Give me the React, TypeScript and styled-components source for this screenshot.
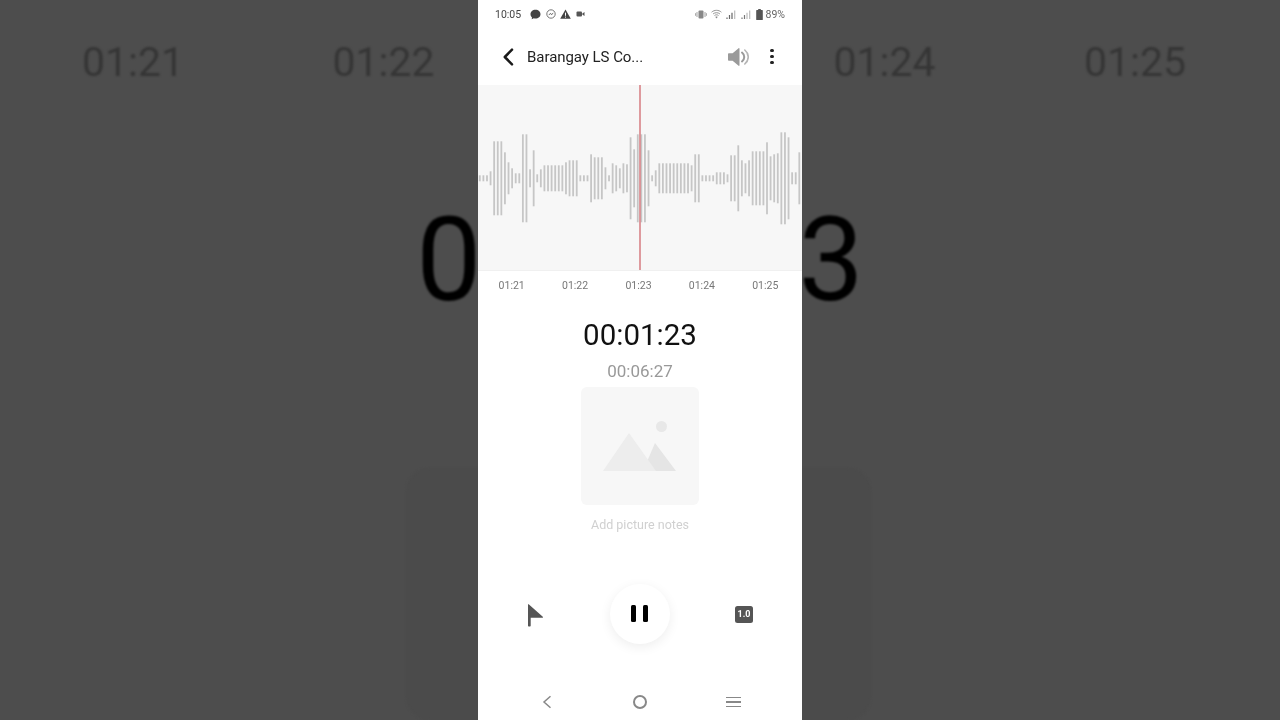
import React from 'react';
import styled, { createGlobalStyle } from 'styled-components';

const TICKS = ['01:21', '01:22', '01:23', '01:24', '01:25'];

// half heights of the wave form, read bar by bar (px above and below the centre line)
const BARS = [
  3, 3, 3, 7, 37, 37, 37, 26, 16, 10, 5, 5, 44, 44, 9, 28, 4, 9, 13, 13, 13, 13, 13, 13, 16, 18, 18, 18, 3, 3, 3, 24, 21,
  21, 21, 11, 3, 15, 13, 10, 15, 14, 41, 29, 44, 44, 44, 28, 3, 8, 15, 15, 15, 15, 15, 15, 15, 15, 15, 13, 24, 24, 3, 3,
  3, 3, 6, 6, 6, 4, 23, 23, 33, 18, 15, 18, 27, 27, 27, 27, 36, 22, 24, 25, 46, 46, 41, 6, 6, 26,
];

const App: React.FC = () => {
  return (
    <Page>
      <GlobalStyle />
      <Backdrop>
        <BackdropTicks>
          {TICKS.map((t) => (
            <BackdropTick key={t}>{t}</BackdropTick>
          ))}
        </BackdropTicks>
        <BackdropTime>00:01:23</BackdropTime>
        <BackdropCard />
      </Backdrop>

      <Phone>
        <StatusBar>
          <StatusGroup>
            <Clock>10:05</Clock>
            <StatusIcons>
              <svg width="11" height="11" viewBox="0 0 11 11">
                <path d="M5.5 .8C2.6.8.5 2.7.5 5.2c0 1.3.6 2.4 1.5 3.2l-.3 1.9 2.1-1c.5.1 1.1.2 1.7.2 2.9 0 5-1.9 5-4.3S8.4.8 5.5.8z" fill="#444" />
              </svg>
              <svg width="10" height="10" viewBox="0 0 10 10">
                <circle cx="5" cy="5" r="4.2" fill="none" stroke="#666" strokeWidth="0.9" />
                <path d="M2.8 6l1.5-1.7 1.2 1 1.7-1.4-1.4 1.9-1.3-1z" fill="#555" stroke="#555" strokeWidth="0.4" />
              </svg>
              <svg width="11" height="10" viewBox="0 0 11 10">
                <path d="M5.5.5L10.8 9.7H.2z" fill="#444" />
                <rect x="5" y="3.6" width="1" height="3.2" fill="#fff" />
                <rect x="5" y="7.6" width="1" height="1" fill="#fff" />
              </svg>
              <svg width="9" height="8" viewBox="0 0 9 8">
                <rect x="0.5" y="1.5" width="5.5" height="5" rx="1" fill="#555" />
                <path d="M6.3 3.6L8.5 2v4L6.3 4.6z" fill="#555" />
              </svg>
            </StatusIcons>
          </StatusGroup>
          <StatusGroup>
            <StatusIconsRight>
              <svg width="12" height="9" viewBox="0 0 12 9">
                <rect x="3.5" y="0.5" width="5" height="8" rx="1" fill="#888" />
                <path d="M2 2v5M.6 3.2v2.6M10 2v5M11.4 3.2v2.6" stroke="#999" strokeWidth="0.9" fill="none" />
              </svg>
              <svg width="11" height="10" viewBox="0 0 11 10">
                <path d="M.6 3.2C3.4.7 7.6.7 10.4 3.2M2.1 4.9C4 3.3 7 3.3 8.9 4.9M3.5 6.5c1.2-.9 2.8-.9 4 0" stroke="#888" strokeWidth="0.9" fill="none" />
                <path d="M5.5 9.6L4.3 7.9c.7-.4 1.7-.4 2.4 0z" fill="#888" />
              </svg>
              <svg width="11" height="9" viewBox="0 0 11 9">
                <path d="M1 9V7.4M3.5 9V5M6 9V2.8" stroke="#666" strokeWidth="1.2" />
                <path d="M8.7 9V.5" stroke="#bbb" strokeWidth="1.2" />
              </svg>
              <svg width="11" height="9" viewBox="0 0 11 9">
                <path d="M1 9V7.4M3.5 9V5" stroke="#777" strokeWidth="1.2" />
                <path d="M6 9V2.8M8.7 9V.5" stroke="#bbb" strokeWidth="1.2" />
              </svg>
              <svg width="7" height="11" viewBox="0 0 7 11">
                <path d="M2.2 0h2.6v1H6.2a.6.6 0 0 1 .6.6v8.8a.6.6 0 0 1-.6.6H.8a.6.6 0 0 1-.6-.6V1.600a.6.6 0 0 1 .6-.6h1.400z" fill="#555" />
              </svg>
            </StatusIconsRight>
            <Battery>89%</Battery>
          </StatusGroup>
        </StatusBar>

        <Header>
          <IconSlot>
            <svg width="12" height="18" viewBox="0 0 12 18">
              <path d="M10 1.700L2.800 9l7.200 7.300" fill="none" stroke="#1a1a1a" strokeWidth="2.500" strokeLinecap="round" strokeLinejoin="round" />
            </svg>
          </IconSlot>
          <Title>Barangay LS Co...</Title>
          <HeaderActions>
            <svg width="21" height="20" viewBox="0 0 21 20">
              <path d="M1 6.300h3.600L10.600 1.200c.4-.3.9 0 .9.500v16.600c0 .5-.5.8-.9.500L4.600 13.700H1c-.5 0-1-.4-1-1V7.300c0-.6.500-1 1-1z" fill="#9a9a9a" />
              <path d="M14 5.600c3 2.500 3 6.300 0 8.800" fill="none" stroke="#9a9a9a" strokeWidth="2" strokeLinecap="round" />
              <path d="M16.800 3c4.600 3.900 4.600 10.100 0 14" fill="none" stroke="#b5b5b5" strokeWidth="1.600" strokeLinecap="round" />
            </svg>
            <Kebab>
              <Dot />
              <Dot />
              <Dot />
            </Kebab>
          </HeaderActions>
        </Header>

        <Wave>
          <svg width="324" height="185" viewBox="0 0 324 185">
            {BARS.map((h, i) => (
              <rect key={i} x={0.9 + i * 3.59} y={93.3 - h} width={1.8} height={h * 2} fill="#c6c6c6" />
            ))}
          </svg>
          <Playhead />
        </Wave>

        <Ticks>
          {TICKS.map((t) => (
            <Tick key={t}>{t}</Tick>
          ))}
        </Ticks>

        <Elapsed>00:01:23</Elapsed>
        <Total>00:06:27</Total>

        <PictureBox>
          <svg width="73" height="38" viewBox="0 0 73 38">
            <path d="M52 10L73 38H40z" fill="#e5e5e5" />
            <path d="M26 0L0 38h53z" fill="#ededed" />
          </svg>
          <Sun />
        </PictureBox>
        <PictureHint>Add picture notes</PictureHint>

        <Controls>
          <ControlSlot>
            <svg width="17" height="24" viewBox="0 -1 17 24">
              <path d="M1 .6c0-.4.4-.6.700-.3L15.800 12.700c.4.400.1 1-.4 1H3.700v8c0 .4-.3.700-.7.700H1.700c-.4 0-.7-.3-.7-.7z" fill="#555" />
            </svg>
          </ControlSlot>
          <PauseButton>
            <PauseBar />
            <PauseBar />
          </PauseButton>
          <ControlSlot>
            <SpeedBadge>1.0</SpeedBadge>
          </ControlSlot>
        </Controls>

        <NavBar>
          <svg width="12" height="14" viewBox="0 0 12 14">
            <path d="M9.500 1.200L3 7l6.500 5.800" fill="none" stroke="#888" strokeWidth="1.500" />
          </svg>
          <NavHome />
          <NavMenu>
            <NavLine />
            <NavLine />
            <NavLine />
          </NavMenu>
        </NavBar>
      </Phone>
    </Page>
  );
};

export default App;

// Styles
const GlobalStyle = createGlobalStyle`
  html, body {
    margin: 0;
    padding: 0;
    background: #4d4d4d;
  }
  body {
    font-family: Roboto, "Liberation Sans", sans-serif;
  }
`;

const Page = styled.div`
  position: relative;
  width: 1280px;
  height: 720px;
  overflow: hidden;
  background: #4d4d4d;
  display: flex;
  justify-content: center;
`;

const Backdrop = styled.div`
  position: absolute;
  inset: 0;
  overflow: hidden;
  display: flex;
  flex-direction: column;
  align-items: center;
  filter: blur(1px);
`;

const BackdropTicks = styled.div`
  margin-top: 38px;
  margin-left: -12px;
  display: flex;
  justify-content: center;
`;

const BackdropTick = styled.div`
  width: 250.5px;
  text-align: center;
  font-size: 41px;
  line-height: 48px;
  color: #353535;
`;

const BackdropTime = styled.div`
  margin-top: 106px;
  font-size: 116px;
  line-height: 136px;
  color: #000;
`;

const BackdropCard = styled.div`
  margin-top: 140px;
  margin-left: -3px;
  width: 465px;
  height: 300px;
  border-radius: 24px;
  background: #4b4b4b;
`;

const Phone = styled.div`
  position: relative;
  width: 324px;
  height: 720px;
  background: #fff;
  display: flex;
  flex-direction: column;
  align-items: center;
  filter: blur(0.35px);
`;

const StatusBar = styled.div`
  width: 100%;
  height: 28px;
  box-sizing: border-box;
  padding: 0 17px;
  display: flex;
  align-items: center;
  justify-content: space-between;
`;

const StatusGroup = styled.div`
  display: flex;
  align-items: center;
`;

const Clock = styled.span`
  font-size: 10.500px;
  color: #444;
`;

const StatusIcons = styled.div`
  margin-left: 9px;
  display: flex;
  align-items: center;
  gap: 4.500px;
`;

const StatusIconsRight = styled.div`
  display: flex;
  align-items: center;
  gap: 4px;
`;

const Battery = styled.span`
  margin-left: 3px;
  font-size: 10.500px;
  color: #666;
`;

const Header = styled.div`
  width: 100%;
  height: 57px;
  box-sizing: border-box;
  padding-left: 24px;
  padding-right: 28.500px;
  display: flex;
  align-items: center;
`;

const IconSlot = styled.div`
  display: flex;
  margin-right: 13px;
`;

const Title = styled.div`
  font-size: 15px;
  color: #222;
  letter-spacing: -0.05px;
`;

const HeaderActions = styled.div`
  margin-left: auto;
  display: flex;
  align-items: center;
  gap: 21px;
`;

const Kebab = styled.div`
  display: flex;
  flex-direction: column;
  gap: 2.500px;
`;

const Dot = styled.span`
  width: 3.500px;
  height: 3.500px;
  border-radius: 50%;
  background: #222;
`;

const Wave = styled.div`
  position: relative;
  width: 100%;
  height: 186px;
  background: #f7f7f7;
  border-bottom: 1px solid #f0f0f0;
  box-sizing: border-box;
  overflow: hidden;
  svg {
    display: block;
  }
`;

const Playhead = styled.div`
  position: absolute;
  top: 0;
  bottom: 0;
  left: 161px;
  width: 2px;
  background: rgba(215, 130, 135, 0.8);
`;

const Ticks = styled.div`
  width: 100%;
  height: 28px;
  box-sizing: border-box;
  padding: 0 5px 0 2px;
  display: flex;
  align-items: center;
  justify-content: space-between;
`;

const Tick = styled.span`
  width: 63.400px;
  text-align: center;
  font-size: 10.500px;
  color: #777;
`;

const Elapsed = styled.div`
  margin-top: 18px;
  font-size: 29.500px;
  line-height: 36px;
  color: #111;
`;

const Total = styled.div`
  margin-top: 8px;
  font-size: 17px;
  line-height: 20px;
  color: #999;
`;

const PictureBox = styled.div`
  position: relative;
  margin-top: 6px;
  width: 118px;
  height: 118px;
  border-radius: 6px;
  background: #f7f7f7;
  display: flex;
  align-items: flex-end;
  justify-content: center;
  padding-bottom: 34px;
  padding-right: 1px;
  box-sizing: border-box;
`;

const Sun = styled.span`
  position: absolute;
  left: 75px;
  top: 34px;
  width: 11px;
  height: 11px;
  border-radius: 50%;
  background: #e8e8e8;
`;

const PictureHint = styled.div`
  margin-top: 11.500px;
  font-size: 12.500px;
  line-height: 16px;
  color: #d0d0d0;
`;

const Controls = styled.div`
  margin-top: 51px;
  width: 100%;
  box-sizing: border-box;
  padding: 0 48px 0 47px;
  display: flex;
  align-items: center;
  justify-content: space-between;
`;

const ControlSlot = styled.div`
  width: 20px;
  padding-top: 2px;
  display: flex;
  justify-content: center;
`;

const PauseButton = styled.div`
  width: 60px;
  height: 60px;
  border-radius: 50%;
  background: #fff;
  box-shadow: 0 3px 12px rgba(0, 0, 0, 0.07);
  display: flex;
  align-items: center;
  justify-content: center;
  gap: 7px;
`;

const PauseBar = styled.span`
  width: 5px;
  height: 17px;
  border-radius: 1.500px;
  background: #000;
`;

const SpeedBadge = styled.div`
  width: 18px;
  height: 17px;
  border-radius: 2.500px;
  background: #555;
  color: #fff;
  font-size: 9px;
  font-weight: 700;
  line-height: 17px;
  text-align: center;
`;

const NavBar = styled.div`
  margin-top: auto;
  width: 100%;
  height: 36px;
  box-sizing: border-box;
  padding: 0 61px 0 63px;
  display: flex;
  align-items: center;
  justify-content: space-between;
`;

const NavHome = styled.span`
  width: 14px;
  height: 14px;
  box-sizing: border-box;
  border: 2px solid #888;
  border-radius: 50%;
`;

const NavMenu = styled.div`
  width: 15px;
  display: flex;
  flex-direction: column;
  gap: 3px;
`;

const NavLine = styled.span`
  height: 1.600px;
  background: #888;
`;
